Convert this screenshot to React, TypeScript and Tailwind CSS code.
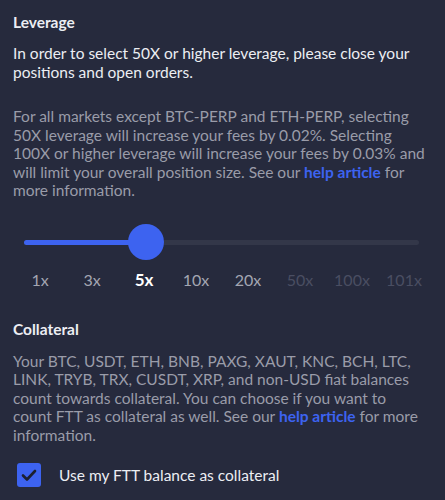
import React, { useState } from "react";

const LEVELS = ["1x", "3x", "5x", "10x", "20x", "50x", "100x", "101x"];

export default function App() {
  const [selected, setSelected] = useState(2);
  const [useFtt, setUseFtt] = useState(true);
  const stepPx = 52;
  const thumbX = 42 + selected * stepPx;

  return (
    <div
      className="w-[445px] h-[500px] overflow-hidden bg-[#262a3d] px-[13px] pt-[12px]"
      style={{ fontFamily: "Lato, 'Noto Sans', sans-serif" }}
    >
      <h2 className="text-[15.5px] font-bold text-[#eceef3] leading-[20px]">
        Leverage
      </h2>
      <p className="mt-[12px] text-[15.5px] leading-[18.5px] text-[#eceef3]">
        In order to select 50X or higher leverage, please close your
        <br />
        positions and open orders.
      </p>
      <p className="mt-[26px] text-[15.5px] leading-[18.5px] text-[#9a9ca9]">
        For all markets except BTC-PERP and ETH-PERP, selecting
        <br />
        50X leverage will increase your fees by 0.02%. Selecting
        <br />
        100X or higher leverage will increase your fees by 0.03% and
        <br />
        will limit your overall position size. See our{" "}
        <a className="font-bold text-[#3d63f0]">help article</a> for
        <br />
        more information.
      </p>

      <div className="relative mt-[22px] h-[40px] -mx-[13px]">
        <div className="absolute left-[24px] right-[26px] top-[18px] h-[5px] rounded-full bg-[#333749]" />
        <div
          className="absolute left-[24px] top-[18px] h-[5px] rounded-l-full bg-[#3d63f0]"
          style={{ width: thumbX - 24 }}
        />
        <div
          className="absolute top-[2px] w-[36px] h-[36px] rounded-full bg-[#3d63f0]"
          style={{ left: thumbX - 18 }}
        />
      </div>

      <div className="flex -mx-[13px] pl-[14px] mt-[8px]">
        {LEVELS.map((l, i) => (
          <button
            key={l}
            onClick={() => i < 5 && setSelected(i)}
            className={`w-[52px] text-center text-[16px] leading-[20px] ${
              i === selected
                ? "font-bold text-white text-[17px]"
                : i < 5
                ? "text-[#a3a6b2]"
                : "text-[#4a4e62]"
            }`}
          >
            {l}
          </button>
        ))}
      </div>

      <h2 className="mt-[29px] text-[15.5px] font-bold text-[#eceef3] leading-[20px]">
        Collateral
      </h2>
      <p className="mt-[13px] text-[15.5px] leading-[18.5px] text-[#9a9ca9]">
        Your BTC, USDT, ETH, BNB, PAXG, XAUT, KNC, BCH, LTC,
        <br />
        LINK, TRYB, TRX, CUSDT, XRP, and non-USD fiat balances
        <br />
        count towards collateral. You can choose if you want to
        <br />
        count FTT as collateral as well. See our{" "}
        <a className="font-bold text-[#3d63f0]">help article</a> for more
        <br />
        information.
      </p>

      <label className="mt-[19px] flex items-center gap-[18px] pl-[4px] cursor-pointer">
        <span
          onClick={() => setUseFtt(!useFtt)}
          className={`flex w-[24px] h-[24px] items-center justify-center rounded-[3px] ${
            useFtt ? "bg-[#3d63f0]" : "border-2 border-[#5a5e70]"
          }`}
        >
          {useFtt && (
            <svg width="16" height="13" viewBox="0 0 16 13" fill="none">
              <path
                d="M2 6.5 L6 10.5 L14 2"
                stroke="#1c2030"
                strokeWidth="2.6"
                strokeLinecap="round"
                strokeLinejoin="round"
              />
            </svg>
          )}
        </span>
        <span className="text-[15.5px] leading-[20px] text-[#eceef3]">
          Use my FTT balance as collateral
        </span>
      </label>
    </div>
  );
}
